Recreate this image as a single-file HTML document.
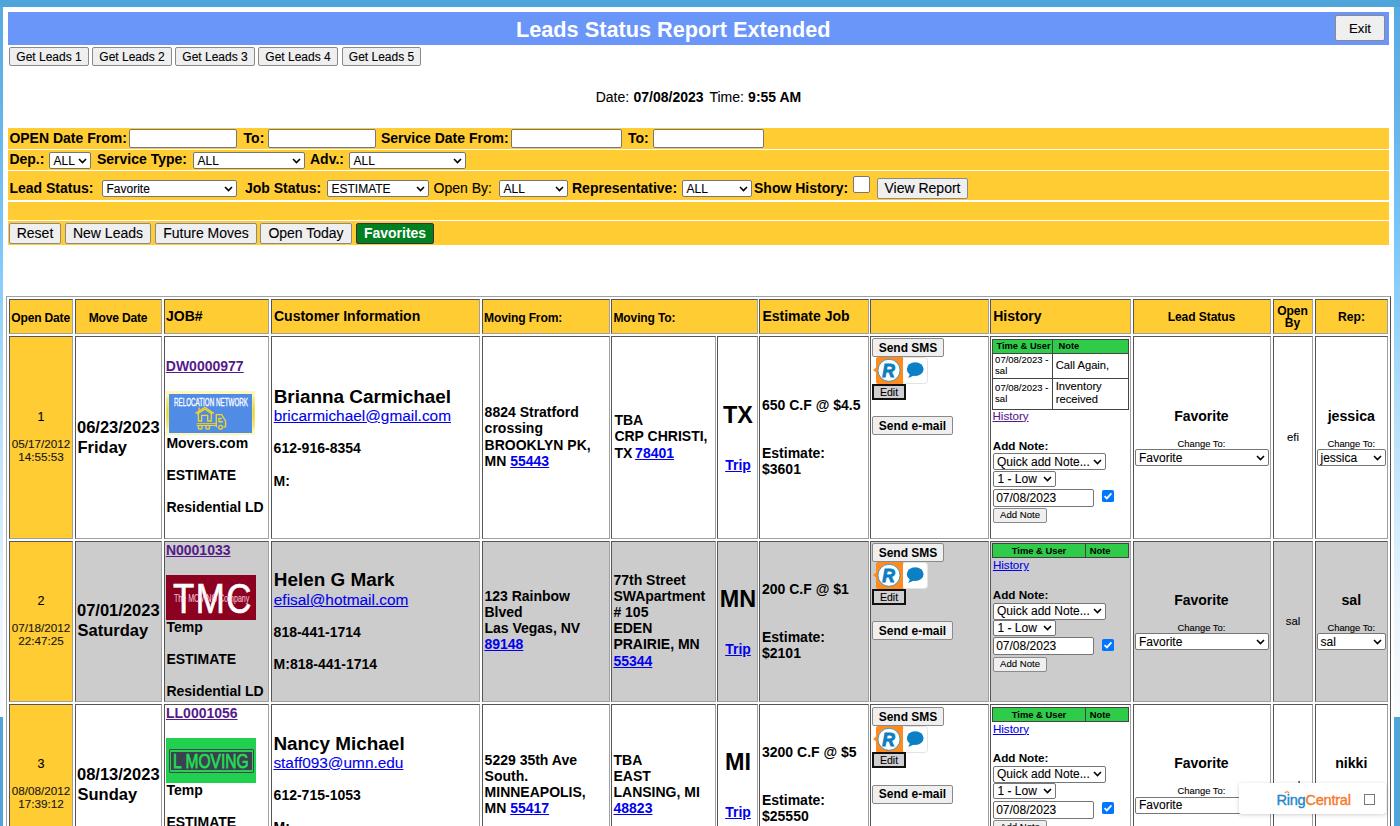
<!DOCTYPE html><html><head><meta charset="utf-8"><style>
*{margin:0;padding:0}
html,body{width:1400px;height:826px;overflow:hidden;background:#fff;font-family:"Liberation Sans",sans-serif;position:relative}
body>div,body>svg{position:absolute}
.t{position:absolute;white-space:nowrap;line-height:1}
a,.lnk{text-decoration:underline}
</style></head><body><div style="left:0px;top:0px;width:1400px;height:7px;background:#4FA4DA"></div>
<div style="left:0px;top:7px;width:3px;height:710px;background:linear-gradient(#57ABE3 0%,#62B2E8 13%,#7DC8FA 34%,#B0DEFA 55%,#E8F4FD 83%,#F8FBFE 100%)"></div>
<div style="left:1394px;top:7px;width:6px;height:710px;background:linear-gradient(#57ABE3 0%,#62B2E8 13%,#7DC8FA 34%,#B0DEFA 55%,#E8F4FD 83%,#F8FBFE 100%)"></div>
<div style="left:0px;top:717px;width:3px;height:109px;background:#4FA4DA"></div>
<div style="left:1394px;top:717px;width:6px;height:109px;background:#4FA4DA"></div>
<div style="left:8px;top:12px;width:1381px;height:33px;background:#6A96FA"></div>
<div class="t" style="left:516px;top:18.63px;font-size:21.7px;font-weight:bold;color:#fff;">Leads Status Report Extended</div>
<div style="left:1335px;top:15px;width:50px;height:26px;background:#EFEFEF;border:1px solid #8A8A8A;border-radius:2px;box-sizing:border-box;"></div>
<div class="t" style="left:1060.0px;width:600px;text-align:center;top:21.63px;font-size:13.2px;font-weight:normal;color:#000;-webkit-text-stroke:0.1px;">Exit</div>
<div style="left:9px;top:47px;width:80px;height:19px;background:#EFEFEF;border:1px solid #8A8A8A;border-radius:2px;box-sizing:border-box;"></div>
<div class="t" style="left:-251.0px;width:600px;text-align:center;top:50.84px;font-size:12px;font-weight:normal;color:#000;-webkit-text-stroke:0.1px;">Get Leads 1</div>
<div style="left:92px;top:47px;width:80px;height:19px;background:#EFEFEF;border:1px solid #8A8A8A;border-radius:2px;box-sizing:border-box;"></div>
<div class="t" style="left:-168.0px;width:600px;text-align:center;top:50.84px;font-size:12px;font-weight:normal;color:#000;-webkit-text-stroke:0.1px;">Get Leads 2</div>
<div style="left:175px;top:47px;width:80px;height:19px;background:#EFEFEF;border:1px solid #8A8A8A;border-radius:2px;box-sizing:border-box;"></div>
<div class="t" style="left:-85.0px;width:600px;text-align:center;top:50.84px;font-size:12px;font-weight:normal;color:#000;-webkit-text-stroke:0.1px;">Get Leads 3</div>
<div style="left:258px;top:47px;width:80px;height:19px;background:#EFEFEF;border:1px solid #8A8A8A;border-radius:2px;box-sizing:border-box;"></div>
<div class="t" style="left:-2.0px;width:600px;text-align:center;top:50.84px;font-size:12px;font-weight:normal;color:#000;-webkit-text-stroke:0.1px;">Get Leads 4</div>
<div style="left:342px;top:47px;width:79px;height:19px;background:#EFEFEF;border:1px solid #8A8A8A;border-radius:2px;box-sizing:border-box;"></div>
<div class="t" style="left:81.5px;width:600px;text-align:center;top:50.84px;font-size:12px;font-weight:normal;color:#000;-webkit-text-stroke:0.1px;">Get Leads 5</div>
<div class="t" style="left:595.7px;top:90.15px;font-size:14px;font-weight:normal;color:#000;-webkit-text-stroke:0.1px;">Date:</div>
<div class="t" style="left:633.5px;top:90.15px;font-size:14px;font-weight:bold;color:#000;">07/08/2023</div>
<div class="t" style="left:709.4px;top:90.15px;font-size:14px;font-weight:normal;color:#000;-webkit-text-stroke:0.1px;">Time:</div>
<div class="t" style="left:748.1px;top:90.15px;font-size:14px;font-weight:bold;color:#000;">9:55 AM</div>
<div style="left:8px;top:128px;width:1381px;height:21px;background:#FFCC33"></div>
<div style="left:8px;top:150px;width:1381px;height:20px;background:#FFCC33"></div>
<div style="left:8px;top:171px;width:1381px;height:29px;background:#FFCC33"></div>
<div style="left:8px;top:202px;width:1381px;height:18px;background:#FFCC33"></div>
<div style="left:8px;top:221px;width:1381px;height:24px;background:#FFCC33"></div>
<div class="t" style="left:9.4px;top:130.75px;font-size:14px;font-weight:bold;color:#000;">OPEN Date From:</div>
<div style="left:129px;top:129px;width:108px;height:19px;background:#fff;border:1px solid #767676;border-radius:2px;box-sizing:border-box;"></div>
<div class="t" style="left:243.6px;top:130.75px;font-size:14px;font-weight:bold;color:#000;">To:</div>
<div style="left:268px;top:129px;width:108px;height:19px;background:#fff;border:1px solid #767676;border-radius:2px;box-sizing:border-box;"></div>
<div class="t" style="left:381px;top:130.75px;font-size:14px;font-weight:bold;color:#000;">Service Date From:</div>
<div style="left:511px;top:129px;width:111px;height:19px;background:#fff;border:1px solid #767676;border-radius:2px;box-sizing:border-box;"></div>
<div class="t" style="left:628px;top:130.75px;font-size:14px;font-weight:bold;color:#000;">To:</div>
<div style="left:653px;top:129px;width:111px;height:19px;background:#fff;border:1px solid #767676;border-radius:2px;box-sizing:border-box;"></div>
<div class="t" style="left:9.4px;top:151.95px;font-size:14px;font-weight:bold;color:#000;">Dep.:</div>
<div style="left:49px;top:152px;width:42px;height:17px;background:#fff;border:1px solid #767676;border-radius:2px;box-sizing:border-box;"></div>
<div class="t" style="left:53.5px;top:154.66px;font-size:12px;font-weight:normal;color:#000;-webkit-text-stroke:0.1px;">ALL</div>
<svg style="position:absolute;left:78px;top:157.9px" width="9" height="6" viewBox="0 0 9 6"><path d="M1 1 L4.5 4.5 L8 1" fill="none" stroke="#000" stroke-width="1.6"/></svg>
<div class="t" style="left:97px;top:151.95px;font-size:14px;font-weight:bold;color:#000;">Service Type:</div>
<div style="left:193px;top:152px;width:112px;height:17px;background:#fff;border:1px solid #767676;border-radius:2px;box-sizing:border-box;"></div>
<div class="t" style="left:197.5px;top:154.66px;font-size:12px;font-weight:normal;color:#000;-webkit-text-stroke:0.1px;">ALL</div>
<svg style="position:absolute;left:292px;top:157.9px" width="9" height="6" viewBox="0 0 9 6"><path d="M1 1 L4.5 4.5 L8 1" fill="none" stroke="#000" stroke-width="1.6"/></svg>
<div class="t" style="left:310px;top:151.95px;font-size:14px;font-weight:bold;color:#000;">Adv.:</div>
<div style="left:349px;top:152px;width:117px;height:17px;background:#fff;border:1px solid #767676;border-radius:2px;box-sizing:border-box;"></div>
<div class="t" style="left:353.5px;top:154.66px;font-size:12px;font-weight:normal;color:#000;-webkit-text-stroke:0.1px;">ALL</div>
<svg style="position:absolute;left:453px;top:157.9px" width="9" height="6" viewBox="0 0 9 6"><path d="M1 1 L4.5 4.5 L8 1" fill="none" stroke="#000" stroke-width="1.6"/></svg>
<div class="t" style="left:9.4px;top:181.05px;font-size:14px;font-weight:bold;color:#000;">Lead Status:</div>
<div style="left:102px;top:180px;width:135px;height:17px;background:#fff;border:1px solid #767676;border-radius:2px;box-sizing:border-box;"></div>
<div class="t" style="left:106.5px;top:182.66px;font-size:12px;font-weight:normal;color:#000;-webkit-text-stroke:0.1px;">Favorite</div>
<svg style="position:absolute;left:224px;top:185.9px" width="9" height="6" viewBox="0 0 9 6"><path d="M1 1 L4.5 4.5 L8 1" fill="none" stroke="#000" stroke-width="1.6"/></svg>
<div class="t" style="left:245px;top:181.05px;font-size:14px;font-weight:bold;color:#000;">Job Status:</div>
<div style="left:327px;top:180px;width:102px;height:17px;background:#fff;border:1px solid #767676;border-radius:2px;box-sizing:border-box;"></div>
<div class="t" style="left:331.5px;top:182.66px;font-size:12px;font-weight:normal;color:#000;-webkit-text-stroke:0.1px;">ESTIMATE</div>
<svg style="position:absolute;left:416px;top:185.9px" width="9" height="6" viewBox="0 0 9 6"><path d="M1 1 L4.5 4.5 L8 1" fill="none" stroke="#000" stroke-width="1.6"/></svg>
<div class="t" style="left:433.5px;top:181.05px;font-size:14px;font-weight:normal;color:#000;-webkit-text-stroke:0.1px;">Open By:</div>
<div style="left:499px;top:180px;width:69px;height:17px;background:#fff;border:1px solid #767676;border-radius:2px;box-sizing:border-box;"></div>
<div class="t" style="left:503.5px;top:182.66px;font-size:12px;font-weight:normal;color:#000;-webkit-text-stroke:0.1px;">ALL</div>
<svg style="position:absolute;left:555px;top:185.9px" width="9" height="6" viewBox="0 0 9 6"><path d="M1 1 L4.5 4.5 L8 1" fill="none" stroke="#000" stroke-width="1.6"/></svg>
<div class="t" style="left:572px;top:181.05px;font-size:14px;font-weight:bold;color:#000;">Representative:</div>
<div style="left:682px;top:180px;width:70px;height:17px;background:#fff;border:1px solid #767676;border-radius:2px;box-sizing:border-box;"></div>
<div class="t" style="left:686.5px;top:182.66px;font-size:12px;font-weight:normal;color:#000;-webkit-text-stroke:0.1px;">ALL</div>
<svg style="position:absolute;left:739px;top:185.9px" width="9" height="6" viewBox="0 0 9 6"><path d="M1 1 L4.5 4.5 L8 1" fill="none" stroke="#000" stroke-width="1.6"/></svg>
<div class="t" style="left:754px;top:181.05px;font-size:14px;font-weight:bold;color:#000;">Show History:</div>
<div style="left:853px;top:176px;width:17px;height:17px;background:#fff;border:1px solid #767676;border-radius:2px;box-sizing:border-box;"></div>
<div style="left:877px;top:178px;width:91px;height:21px;background:#EFEFEF;border:1px solid #8A8A8A;border-radius:2px;box-sizing:border-box;"></div>
<div class="t" style="left:622.5px;width:600px;text-align:center;top:181.15px;font-size:14px;font-weight:normal;color:#000;-webkit-text-stroke:0.1px;">View Report</div>
<div style="left:9px;top:223px;width:52px;height:21px;background:#EFEFEF;border:1px solid #8A8A8A;border-radius:2px;box-sizing:border-box;"></div>
<div class="t" style="left:-265.0px;width:600px;text-align:center;top:226.15px;font-size:14px;font-weight:normal;color:#000;-webkit-text-stroke:0.1px;">Reset</div>
<div style="left:65px;top:223px;width:86px;height:21px;background:#EFEFEF;border:1px solid #8A8A8A;border-radius:2px;box-sizing:border-box;"></div>
<div class="t" style="left:-192.0px;width:600px;text-align:center;top:226.15px;font-size:14px;font-weight:normal;color:#000;-webkit-text-stroke:0.1px;">New Leads</div>
<div style="left:155px;top:223px;width:102px;height:21px;background:#EFEFEF;border:1px solid #8A8A8A;border-radius:2px;box-sizing:border-box;"></div>
<div class="t" style="left:-94.0px;width:600px;text-align:center;top:226.15px;font-size:14px;font-weight:normal;color:#000;-webkit-text-stroke:0.1px;">Future Moves</div>
<div style="left:260px;top:223px;width:92px;height:21px;background:#EFEFEF;border:1px solid #8A8A8A;border-radius:2px;box-sizing:border-box;"></div>
<div class="t" style="left:6.0px;width:600px;text-align:center;top:226.15px;font-size:14px;font-weight:normal;color:#000;-webkit-text-stroke:0.1px;">Open Today</div>
<div style="left:356px;top:223px;width:78px;height:21px;background:#008020;border:1px solid #333;border-radius:2px;box-sizing:border-box;"></div>
<div class="t" style="left:95.0px;width:600px;text-align:center;top:226.15px;font-size:14px;font-weight:bold;color:#fff;">Favorites</div>
<div style="left:6px;top:296px;width:1385px;height:600px;border:1px solid;border-color:#A0A0A0 #505050 #505050 #A0A0A0;box-sizing:border-box"></div>
<div style="left:9px;top:299px;width:64px;height:35px;background:#FFCC33;border:1px solid;border-color:#555 #A0A0A0 #A0A0A0 #555;box-sizing:border-box"></div>
<div style="left:75px;top:299px;width:87px;height:35px;background:#FFCC33;border:1px solid;border-color:#555 #A0A0A0 #A0A0A0 #555;box-sizing:border-box"></div>
<div style="left:164px;top:299px;width:105px;height:35px;background:#FFCC33;border:1px solid;border-color:#555 #A0A0A0 #A0A0A0 #555;box-sizing:border-box"></div>
<div style="left:271px;top:299px;width:209px;height:35px;background:#FFCC33;border:1px solid;border-color:#555 #A0A0A0 #A0A0A0 #555;box-sizing:border-box"></div>
<div style="left:482px;top:299px;width:128px;height:35px;background:#FFCC33;border:1px solid;border-color:#555 #A0A0A0 #A0A0A0 #555;box-sizing:border-box"></div>
<div style="left:611px;top:299px;width:147px;height:35px;background:#FFCC33;border:1px solid;border-color:#555 #A0A0A0 #A0A0A0 #555;box-sizing:border-box"></div>
<div style="left:759px;top:299px;width:110px;height:35px;background:#FFCC33;border:1px solid;border-color:#555 #A0A0A0 #A0A0A0 #555;box-sizing:border-box"></div>
<div style="left:870px;top:299px;width:119px;height:35px;background:#FFCC33;border:1px solid;border-color:#555 #A0A0A0 #A0A0A0 #555;box-sizing:border-box"></div>
<div style="left:990px;top:299px;width:141px;height:35px;background:#FFCC33;border:1px solid;border-color:#555 #A0A0A0 #A0A0A0 #555;box-sizing:border-box"></div>
<div style="left:1133px;top:299px;width:138px;height:35px;background:#FFCC33;border:1px solid;border-color:#555 #A0A0A0 #A0A0A0 #555;box-sizing:border-box"></div>
<div style="left:1273px;top:299px;width:40px;height:35px;background:#FFCC33;border:1px solid;border-color:#555 #A0A0A0 #A0A0A0 #555;box-sizing:border-box"></div>
<div style="left:1315px;top:299px;width:73px;height:35px;background:#FFCC33;border:1px solid;border-color:#555 #A0A0A0 #A0A0A0 #555;box-sizing:border-box"></div>
<div style="left:9px;top:336px;width:64px;height:203px;background:#FFCC33;border:1px solid;border-color:#555 #A0A0A0 #A0A0A0 #555;box-sizing:border-box"></div>
<div style="left:75px;top:336px;width:87px;height:203px;background:#fff;border:1px solid;border-color:#555 #A0A0A0 #A0A0A0 #555;box-sizing:border-box"></div>
<div style="left:164px;top:336px;width:105px;height:203px;background:#fff;border:1px solid;border-color:#555 #A0A0A0 #A0A0A0 #555;box-sizing:border-box"></div>
<div style="left:271px;top:336px;width:209px;height:203px;background:#fff;border:1px solid;border-color:#555 #A0A0A0 #A0A0A0 #555;box-sizing:border-box"></div>
<div style="left:482px;top:336px;width:128px;height:203px;background:#fff;border:1px solid;border-color:#555 #A0A0A0 #A0A0A0 #555;box-sizing:border-box"></div>
<div style="left:611px;top:336px;width:105px;height:203px;background:#fff;border:1px solid;border-color:#555 #A0A0A0 #A0A0A0 #555;box-sizing:border-box"></div>
<div style="left:717px;top:336px;width:41px;height:203px;background:#fff;border:1px solid;border-color:#555 #A0A0A0 #A0A0A0 #555;box-sizing:border-box"></div>
<div style="left:759px;top:336px;width:110px;height:203px;background:#fff;border:1px solid;border-color:#555 #A0A0A0 #A0A0A0 #555;box-sizing:border-box"></div>
<div style="left:870px;top:336px;width:119px;height:203px;background:#fff;border:1px solid;border-color:#555 #A0A0A0 #A0A0A0 #555;box-sizing:border-box"></div>
<div style="left:990px;top:336px;width:141px;height:203px;background:#fff;border:1px solid;border-color:#555 #A0A0A0 #A0A0A0 #555;box-sizing:border-box"></div>
<div style="left:1133px;top:336px;width:138px;height:203px;background:#fff;border:1px solid;border-color:#555 #A0A0A0 #A0A0A0 #555;box-sizing:border-box"></div>
<div style="left:1273px;top:336px;width:40px;height:203px;background:#fff;border:1px solid;border-color:#555 #A0A0A0 #A0A0A0 #555;box-sizing:border-box"></div>
<div style="left:1315px;top:336px;width:73px;height:203px;background:#fff;border:1px solid;border-color:#555 #A0A0A0 #A0A0A0 #555;box-sizing:border-box"></div>
<div style="left:9px;top:541px;width:64px;height:161px;background:#FFCC33;border:1px solid;border-color:#555 #A0A0A0 #A0A0A0 #555;box-sizing:border-box"></div>
<div style="left:75px;top:541px;width:87px;height:161px;background:#CCCCCC;border:1px solid;border-color:#555 #A0A0A0 #A0A0A0 #555;box-sizing:border-box"></div>
<div style="left:164px;top:541px;width:105px;height:161px;background:#CCCCCC;border:1px solid;border-color:#555 #A0A0A0 #A0A0A0 #555;box-sizing:border-box"></div>
<div style="left:271px;top:541px;width:209px;height:161px;background:#CCCCCC;border:1px solid;border-color:#555 #A0A0A0 #A0A0A0 #555;box-sizing:border-box"></div>
<div style="left:482px;top:541px;width:128px;height:161px;background:#CCCCCC;border:1px solid;border-color:#555 #A0A0A0 #A0A0A0 #555;box-sizing:border-box"></div>
<div style="left:611px;top:541px;width:105px;height:161px;background:#CCCCCC;border:1px solid;border-color:#555 #A0A0A0 #A0A0A0 #555;box-sizing:border-box"></div>
<div style="left:717px;top:541px;width:41px;height:161px;background:#CCCCCC;border:1px solid;border-color:#555 #A0A0A0 #A0A0A0 #555;box-sizing:border-box"></div>
<div style="left:759px;top:541px;width:110px;height:161px;background:#CCCCCC;border:1px solid;border-color:#555 #A0A0A0 #A0A0A0 #555;box-sizing:border-box"></div>
<div style="left:870px;top:541px;width:119px;height:161px;background:#CCCCCC;border:1px solid;border-color:#555 #A0A0A0 #A0A0A0 #555;box-sizing:border-box"></div>
<div style="left:990px;top:541px;width:141px;height:161px;background:#CCCCCC;border:1px solid;border-color:#555 #A0A0A0 #A0A0A0 #555;box-sizing:border-box"></div>
<div style="left:1133px;top:541px;width:138px;height:161px;background:#CCCCCC;border:1px solid;border-color:#555 #A0A0A0 #A0A0A0 #555;box-sizing:border-box"></div>
<div style="left:1273px;top:541px;width:40px;height:161px;background:#CCCCCC;border:1px solid;border-color:#555 #A0A0A0 #A0A0A0 #555;box-sizing:border-box"></div>
<div style="left:1315px;top:541px;width:73px;height:161px;background:#CCCCCC;border:1px solid;border-color:#555 #A0A0A0 #A0A0A0 #555;box-sizing:border-box"></div>
<div style="left:9px;top:704px;width:64px;height:297px;background:#FFCC33;border:1px solid;border-color:#555 #A0A0A0 #A0A0A0 #555;box-sizing:border-box"></div>
<div style="left:75px;top:704px;width:87px;height:297px;background:#fff;border:1px solid;border-color:#555 #A0A0A0 #A0A0A0 #555;box-sizing:border-box"></div>
<div style="left:164px;top:704px;width:105px;height:297px;background:#fff;border:1px solid;border-color:#555 #A0A0A0 #A0A0A0 #555;box-sizing:border-box"></div>
<div style="left:271px;top:704px;width:209px;height:297px;background:#fff;border:1px solid;border-color:#555 #A0A0A0 #A0A0A0 #555;box-sizing:border-box"></div>
<div style="left:482px;top:704px;width:128px;height:297px;background:#fff;border:1px solid;border-color:#555 #A0A0A0 #A0A0A0 #555;box-sizing:border-box"></div>
<div style="left:611px;top:704px;width:105px;height:297px;background:#fff;border:1px solid;border-color:#555 #A0A0A0 #A0A0A0 #555;box-sizing:border-box"></div>
<div style="left:717px;top:704px;width:41px;height:297px;background:#fff;border:1px solid;border-color:#555 #A0A0A0 #A0A0A0 #555;box-sizing:border-box"></div>
<div style="left:759px;top:704px;width:110px;height:297px;background:#fff;border:1px solid;border-color:#555 #A0A0A0 #A0A0A0 #555;box-sizing:border-box"></div>
<div style="left:870px;top:704px;width:119px;height:297px;background:#fff;border:1px solid;border-color:#555 #A0A0A0 #A0A0A0 #555;box-sizing:border-box"></div>
<div style="left:990px;top:704px;width:141px;height:297px;background:#fff;border:1px solid;border-color:#555 #A0A0A0 #A0A0A0 #555;box-sizing:border-box"></div>
<div style="left:1133px;top:704px;width:138px;height:297px;background:#fff;border:1px solid;border-color:#555 #A0A0A0 #A0A0A0 #555;box-sizing:border-box"></div>
<div style="left:1273px;top:704px;width:40px;height:297px;background:#fff;border:1px solid;border-color:#555 #A0A0A0 #A0A0A0 #555;box-sizing:border-box"></div>
<div style="left:1315px;top:704px;width:73px;height:297px;background:#fff;border:1px solid;border-color:#555 #A0A0A0 #A0A0A0 #555;box-sizing:border-box"></div>
<div class="t" style="left:11.3px;top:311.56px;font-size:12.1px;font-weight:bold;color:#000;letter-spacing:-0.2px;">Open Date</div>
<div class="t" style="left:-182px;width:600px;text-align:center;top:311.56px;font-size:12.1px;font-weight:bold;color:#000;letter-spacing:-0.2px;">Move Date</div>
<div class="t" style="left:166px;top:309.25px;font-size:14px;font-weight:bold;color:#000;">JOB#</div>
<div class="t" style="left:274px;top:309.15px;font-size:14px;font-weight:bold;color:#000;">Customer Information</div>
<div class="t" style="left:484px;top:311.96px;font-size:12.1px;font-weight:bold;color:#000;letter-spacing:-0.15px;">Moving From:</div>
<div class="t" style="left:613.4px;top:311.96px;font-size:12.1px;font-weight:bold;color:#000;letter-spacing:-0.15px;">Moving To:</div>
<div class="t" style="left:762.4px;top:308.65px;font-size:14px;font-weight:bold;color:#000;">Estimate Job</div>
<div class="t" style="left:993.2px;top:309.05px;font-size:14px;font-weight:bold;color:#000;">History</div>
<div class="t" style="left:901.4000000000001px;width:600px;text-align:center;top:311.36px;font-size:12.1px;font-weight:bold;color:#000;letter-spacing:-0.1px;">Lead Status</div>
<div class="t" style="left:992.5px;width:600px;text-align:center;top:304.66px;font-size:12.1px;font-weight:bold;color:#000;letter-spacing:-0.1px;">Open</div>
<div class="t" style="left:992.5px;width:600px;text-align:center;top:317.26px;font-size:12.1px;font-weight:bold;color:#000;">By</div>
<div class="t" style="left:1051.5px;width:600px;text-align:center;top:311.46px;font-size:12.1px;font-weight:bold;color:#000;">Rep:</div>
<div class="t" style="left:-259px;width:600px;text-align:center;top:411.13px;font-size:12.6px;font-weight:normal;color:#000;-webkit-text-stroke:0.1px;">1</div>
<div class="t" style="left:-259px;width:600px;text-align:center;top:438.40px;font-size:11.7px;font-weight:normal;color:#151515;-webkit-text-stroke:0.1px;">05/17/2012</div>
<div class="t" style="left:-259px;width:600px;text-align:center;top:451.40px;font-size:11.7px;font-weight:normal;color:#151515;-webkit-text-stroke:0.1px;">14:55:53</div>
<div class="t" style="left:77px;top:419.43px;font-size:16.5px;font-weight:bold;color:#000;">06/23/2023</div>
<div class="t" style="left:77.5px;top:439.23px;font-size:16.5px;font-weight:bold;color:#000;">Friday</div>
<div class="t" style="left:165.8px;top:358.95px;font-size:14px;font-weight:bold;color:#551A8B;text-decoration:underline;">DW0000977</div>
<div style="left:166px;top:391px;width:89px;height:44px;background:#FFF6BC"></div>
<div style="left:166px;top:397px;width:3px;height:32px;background:radial-gradient(ellipse at 50% 50%,#E8D21E 0%,#F3E570 55%,#FFF6BC 100%)"></div>
<div style="left:252px;top:397px;width:3px;height:32px;background:radial-gradient(ellipse at 50% 50%,#E8D21E 0%,#F3E570 55%,#FFF6BC 100%)"></div>
<div style="left:169px;top:394px;width:83px;height:39px;background:#508CE6"></div>
<div class="t" style="left:173.8px;top:396.6px;font-size:11.2px;line-height:10px;font-weight:normal;-webkit-text-stroke:0.35px #fff;color:#fff;transform:scaleX(0.56);transform-origin:0 0">RELOCATION NETWORK</div>
<svg style="position:absolute;left:162px;top:386px" width="100" height="55" viewBox="0 0 100 55"><g fill="none" stroke="#F2D42A" stroke-width="1.35" stroke-linejoin="round" stroke-linecap="round"><path d="M33.9 27.1 L42.9 21.4 L51.4 27.1"/><path d="M35.6 27.6 L42.9 23.2 L49.8 27.6"/><path d="M37.1 22 V24.5"/><path d="M36.4 27 V35 H39.6 V29.3 H45.7 V35 H49.3 V27"/><path d="M35 37.7 H54.3" stroke-width="1"/><path d="M35 39.5 H54.3" stroke-width="1"/><path d="M54.3 40.7 V28.6 H59.6 L63.6 35 V40.7 H62"/><path d="M59.3 32.5 H57 V35.7 H60.3"/><circle cx="38.2" cy="41.2" r="1.9"/><circle cx="45.7" cy="41.2" r="1.9"/><circle cx="58.6" cy="41.2" r="1.9"/></g></svg>
<div class="t" style="left:166.4px;top:435.95px;font-size:14px;font-weight:bold;color:#000;">Movers.com</div>
<div class="t" style="left:166.4px;top:468.45px;font-size:14px;font-weight:bold;color:#000;">ESTIMATE</div>
<div class="t" style="left:166.4px;top:500.45px;font-size:14px;font-weight:bold;color:#000;">Residential LD</div>
<div class="t" style="left:273.7px;top:388.20px;font-size:18.9px;font-weight:bold;color:#000;">Brianna Carmichael</div>
<div class="t" style="left:273.7px;top:407.66px;font-size:15.4px;font-weight:normal;color:#0000EE;-webkit-text-stroke:0.1px;text-decoration:underline;">bricarmichael@gmail.com</div>
<div class="t" style="left:273.6px;top:441.45px;font-size:14px;font-weight:bold;color:#000;">612-916-8354</div>
<div class="t" style="left:273.6px;top:473.75px;font-size:14px;font-weight:bold;color:#000;">M:</div>
<div class="t" style="left:484.6px;top:405.35px;font-size:14px;font-weight:bold;color:#000;">8824 Stratford</div>
<div class="t" style="left:484.6px;top:421.45px;font-size:14px;font-weight:bold;color:#000;">crossing</div>
<div class="t" style="left:484.6px;top:437.55px;font-size:14px;font-weight:bold;color:#000;">BROOKLYN PK,</div>
<div class="t" style="left:484.6px;top:453.65px;font-size:14px;font-weight:bold;color:#000;">MN </div>
<div class="t" style="left:510.2px;top:453.65px;font-size:14px;font-weight:bold;color:#0000EE;text-decoration:underline;">55443</div>
<div class="t" style="left:614.4px;top:413.35px;font-size:14px;font-weight:bold;color:#000;">TBA</div>
<div class="t" style="left:614.4px;top:429.45px;font-size:14px;font-weight:bold;color:#000;">CRP CHRISTI,</div>
<div class="t" style="left:614.4px;top:445.55px;font-size:14px;font-weight:bold;color:#000;">TX </div>
<div class="t" style="left:635.1px;top:445.55px;font-size:14px;font-weight:bold;color:#0000EE;text-decoration:underline;">78401</div>
<div class="t" style="left:438px;width:600px;text-align:center;top:403.59px;font-size:23.4px;font-weight:bold;color:#000;transform:scaleY(1.06);transform-origin:50% 85%;">TX</div>
<div class="t" style="left:438px;width:600px;text-align:center;top:457.75px;font-size:14px;font-weight:bold;color:#0000EE;"><span style="text-decoration:underline">Trip</span></div>
<div class="t" style="left:762px;top:397.75px;font-size:14px;font-weight:bold;color:#000;">650 C.F @ $4.5</div>
<div class="t" style="left:762px;top:446.05px;font-size:14px;font-weight:bold;color:#000;">Estimate:</div>
<div class="t" style="left:762px;top:461.65px;font-size:14px;font-weight:bold;color:#000;">$3601</div>
<div style="left:872px;top:338px;width:72px;height:19px;background:#EFEFEF;border:1px solid #8A8A8A;border-radius:2px;box-sizing:border-box;"></div>
<div class="t" style="left:608.0px;width:600px;text-align:center;top:341.54px;font-size:12px;font-weight:bold;color:#000;">Send SMS</div>
<svg style="position:absolute;left:872px;top:357px" width="58" height="27" viewBox="0 0 58 27"><rect x="30.5" y="0.5" width="25" height="26" rx="3" fill="#fff" stroke="#E3E3E3"/><path d="M6 0 H31 V27 H6 Q4 27 4 25 V15.5 L1 13 L4 10.5 V2 Q4 0 6 0 Z" fill="#FF8A1E"/><circle cx="17" cy="13.3" r="11" fill="#fff" stroke="#1D8BC6" stroke-width="0.8"/><text x="16.6" y="19.6" font-family="Liberation Sans" font-weight="bold" font-style="italic" font-size="17.5" fill="#0B7DC1" stroke="#0B7DC1" stroke-width="0.9" text-anchor="middle">R</text><ellipse cx="43.2" cy="12.1" rx="8.4" ry="6.9" fill="#0B80C4"/><path d="M38.3 16 L36.3 21 L42.5 18.2 Z" fill="#0B80C4"/></svg>
<div style="left:872px;top:384px;width:34px;height:16px;background:#D0D0D0;border:2px solid #111;box-sizing:border-box;"></div>
<div class="t" style="left:589px;width:600px;text-align:center;top:386.91px;font-size:10.5px;font-weight:normal;color:#000;-webkit-text-stroke:0.1px;">Edit</div>
<div style="left:872px;top:416px;width:81px;height:19px;background:#EFEFEF;border:1px solid #8A8A8A;border-radius:2px;box-sizing:border-box;"></div>
<div class="t" style="left:612.5px;width:600px;text-align:center;top:419.54px;font-size:12px;font-weight:bold;color:#000;">Send e-mail</div>
<div style="left:992px;top:339px;width:137px;height:71px;border:1px solid #444;box-sizing:border-box"></div>
<div style="left:993px;top:340px;width:135px;height:14px;background:#2ECC48"></div>
<div style="left:993px;top:353px;width:135px;height:1px;background:#444"></div>
<div style="left:993px;top:378px;width:135px;height:1px;background:#444"></div>
<div style="left:1052px;top:340px;width:1px;height:69px;background:#444"></div>
<div class="t" style="left:996.5px;top:341.53px;font-size:9.3px;font-weight:bold;color:#000;">Time &amp; User</div>
<div class="t" style="left:1058.6px;top:341.53px;font-size:9.3px;font-weight:bold;color:#000;">Note</div>
<div class="t" style="left:995.1px;top:355.16px;font-size:9.5px;font-weight:normal;color:#000;-webkit-text-stroke:0.1px;">07/08/2023 -</div>
<div class="t" style="left:995.1px;top:366.26px;font-size:9.5px;font-weight:normal;color:#000;-webkit-text-stroke:0.1px;">sal</div>
<div class="t" style="left:1055.7px;top:360.02px;font-size:11.2px;font-weight:normal;color:#000;-webkit-text-stroke:0.1px;">Call Again,</div>
<div class="t" style="left:995.1px;top:383.26px;font-size:9.5px;font-weight:normal;color:#000;-webkit-text-stroke:0.1px;">07/08/2023 -</div>
<div class="t" style="left:995.1px;top:394.26px;font-size:9.5px;font-weight:normal;color:#000;-webkit-text-stroke:0.1px;">sal</div>
<div class="t" style="left:1055.7px;top:380.72px;font-size:11.2px;font-weight:normal;color:#000;-webkit-text-stroke:0.1px;">Inventory</div>
<div class="t" style="left:1055.7px;top:393.92px;font-size:11.2px;font-weight:normal;color:#000;-webkit-text-stroke:0.1px;">received</div>
<div class="t" style="left:992.5px;top:409.68px;font-size:11.6px;font-weight:normal;color:#551A8B;-webkit-text-stroke:0.1px;text-decoration:underline;">History</div>
<div class="t" style="left:992.7px;top:440.20px;font-size:11.7px;font-weight:bold;color:#000;">Add Note:</div>
<div style="left:993px;top:453px;width:113px;height:17px;background:#fff;border:1px solid #767676;border-radius:2px;box-sizing:border-box;"></div>
<div class="t" style="left:997px;top:455.66px;font-size:12px;font-weight:normal;color:#000;-webkit-text-stroke:0.1px;">Quick add Note...</div>
<svg style="position:absolute;left:1093px;top:458.9px" width="9" height="6" viewBox="0 0 9 6"><path d="M1 1 L4.5 4.5 L8 1" fill="none" stroke="#000" stroke-width="1.6"/></svg>
<div style="left:993px;top:470.5px;width:63px;height:16px;background:#fff;border:1px solid #767676;border-radius:2px;box-sizing:border-box;"></div>
<div class="t" style="left:997.5px;top:472.66px;font-size:12px;font-weight:normal;color:#000;-webkit-text-stroke:0.1px;">1 - Low</div>
<svg style="position:absolute;left:1043px;top:475.9px" width="9" height="6" viewBox="0 0 9 6"><path d="M1 1 L4.5 4.5 L8 1" fill="none" stroke="#000" stroke-width="1.6"/></svg>
<div style="left:993px;top:488.5px;width:101px;height:18px;background:#fff;border:1px solid #767676;border-radius:2px;box-sizing:border-box;"></div>
<div class="t" style="left:996.2px;top:491.66px;font-size:12px;font-weight:normal;color:#000;-webkit-text-stroke:0.1px;">07/08/2023</div>
<svg style="position:absolute;left:1102px;top:490.0px" width="12" height="12" viewBox="0 0 13 13"><rect x="0" y="0" width="13" height="13" rx="2" fill="#0075FF"/><path d="M2.8 6.6 L5.3 9.1 L10.2 3.6" fill="none" stroke="#fff" stroke-width="1.9"/></svg>
<div style="left:993px;top:507.5px;width:54px;height:15px;background:#EFEFEF;border:1px solid #8A8A8A;border-radius:2px;box-sizing:border-box;"></div>
<div class="t" style="left:720.0px;width:600px;text-align:center;top:510.17px;font-size:9.6px;font-weight:normal;color:#000;-webkit-text-stroke:0.1px;">Add Note</div>
<div class="t" style="left:901.4000000000001px;width:600px;text-align:center;top:409.15px;font-size:14px;font-weight:bold;color:#000;">Favorite</div>
<div class="t" style="left:901.4000000000001px;width:600px;text-align:center;top:439.04px;font-size:9.4px;font-weight:normal;color:#000;-webkit-text-stroke:0.1px;">Change To:</div>
<div style="left:1135px;top:449px;width:134px;height:17px;background:#fff;border:1px solid #767676;border-radius:2px;box-sizing:border-box;"></div>
<div class="t" style="left:1139px;top:451.66px;font-size:12px;font-weight:normal;color:#000;-webkit-text-stroke:0.1px;">Favorite</div>
<svg style="position:absolute;left:1256px;top:454.9px" width="9" height="6" viewBox="0 0 9 6"><path d="M1 1 L4.5 4.5 L8 1" fill="none" stroke="#000" stroke-width="1.6"/></svg>
<div class="t" style="left:993px;width:600px;text-align:center;top:431.93px;font-size:11.3px;font-weight:normal;color:#000;-webkit-text-stroke:0.1px;">efi</div>
<div class="t" style="left:1051.3px;width:600px;text-align:center;top:408.98px;font-size:14.2px;font-weight:bold;color:#000;">jessica</div>
<div class="t" style="left:1051.3px;width:600px;text-align:center;top:439.04px;font-size:9.4px;font-weight:normal;color:#000;-webkit-text-stroke:0.1px;">Change To:</div>
<div style="left:1317px;top:449px;width:69px;height:17px;background:#fff;border:1px solid #767676;border-radius:2px;box-sizing:border-box;"></div>
<div class="t" style="left:1320.5px;top:451.66px;font-size:12px;font-weight:normal;color:#000;-webkit-text-stroke:0.1px;">jessica</div>
<svg style="position:absolute;left:1373px;top:454.9px" width="9" height="6" viewBox="0 0 9 6"><path d="M1 1 L4.5 4.5 L8 1" fill="none" stroke="#000" stroke-width="1.6"/></svg>
<div class="t" style="left:-259px;width:600px;text-align:center;top:594.63px;font-size:12.6px;font-weight:normal;color:#000;-webkit-text-stroke:0.1px;">2</div>
<div class="t" style="left:-259px;width:600px;text-align:center;top:622.20px;font-size:11.7px;font-weight:normal;color:#151515;-webkit-text-stroke:0.1px;">07/18/2012</div>
<div class="t" style="left:-259px;width:600px;text-align:center;top:635.20px;font-size:11.7px;font-weight:normal;color:#151515;-webkit-text-stroke:0.1px;">22:47:25</div>
<div class="t" style="left:77px;top:602.23px;font-size:16.5px;font-weight:bold;color:#000;">07/01/2023</div>
<div class="t" style="left:77.5px;top:622.03px;font-size:16.5px;font-weight:bold;color:#000;">Saturday</div>
<div class="t" style="left:165.9px;top:543.45px;font-size:14px;font-weight:bold;color:#551A8B;text-decoration:underline;">N0001033</div>
<div style="left:166px;top:575px;width:90px;height:45px;background:#8C0020;overflow:hidden"><div class="t" style="left:7.3px;top:5.6px;font-size:42.5px;line-height:36px;color:#fff;-webkit-text-stroke:0.7px #fff;transform:scaleX(0.82);transform-origin:0 0;letter-spacing:1.8px">TMC</div><div class="t" style="left:8px;top:19px;font-size:10.2px;line-height:10px;color:rgba(255,215,225,0.85);-webkit-text-stroke:0.2px rgba(255,215,225,0.85);transform:scaleX(0.697);transform-origin:0 0">The MOVING Company</div></div>
<div class="t" style="left:166.4px;top:619.95px;font-size:14px;font-weight:bold;color:#000;">Temp</div>
<div class="t" style="left:166.4px;top:652.15px;font-size:14px;font-weight:bold;color:#000;">ESTIMATE</div>
<div class="t" style="left:166.4px;top:684.25px;font-size:14px;font-weight:bold;color:#000;">Residential LD</div>
<div class="t" style="left:273.8px;top:571.40px;font-size:18.9px;font-weight:bold;color:#000;">Helen G Mark</div>
<div class="t" style="left:273.8px;top:592.36px;font-size:15.4px;font-weight:normal;color:#0000EE;-webkit-text-stroke:0.1px;text-decoration:underline;">efisal@hotmail.com</div>
<div class="t" style="left:273.6px;top:625.35px;font-size:14px;font-weight:bold;color:#000;">818-441-1714</div>
<div class="t" style="left:273.6px;top:657.25px;font-size:14px;font-weight:bold;color:#000;">M:818-441-1714</div>
<div class="t" style="left:484.4px;top:588.95px;font-size:14px;font-weight:bold;color:#000;">123 Rainbow</div>
<div class="t" style="left:484.4px;top:605.05px;font-size:14px;font-weight:bold;color:#000;">Blved</div>
<div class="t" style="left:484.4px;top:621.15px;font-size:14px;font-weight:bold;color:#000;">Las Vegas, NV</div>
<div class="t" style="left:484.4px;top:637.25px;font-size:14px;font-weight:bold;color:#0000EE;text-decoration:underline;">89148</div>
<div class="t" style="left:613.4px;top:573.05px;font-size:14px;font-weight:bold;color:#000;">77th Street</div>
<div class="t" style="left:613.4px;top:589.15px;font-size:14px;font-weight:bold;color:#000;">SWApartment</div>
<div class="t" style="left:613.4px;top:605.25px;font-size:14px;font-weight:bold;color:#000;"># 105</div>
<div class="t" style="left:613.4px;top:621.35px;font-size:14px;font-weight:bold;color:#000;">EDEN</div>
<div class="t" style="left:613.4px;top:637.45px;font-size:14px;font-weight:bold;color:#000;">PRAIRIE, MN</div>
<div class="t" style="left:613.4px;top:653.55px;font-size:14px;font-weight:bold;color:#0000EE;text-decoration:underline;">55344</div>
<div class="t" style="left:438px;width:600px;text-align:center;top:588.19px;font-size:23.4px;font-weight:bold;color:#000;transform:scaleY(1.06);transform-origin:50% 85%;">MN</div>
<div class="t" style="left:438px;width:600px;text-align:center;top:642.05px;font-size:14px;font-weight:bold;color:#0000EE;"><span style="text-decoration:underline">Trip</span></div>
<div class="t" style="left:762px;top:581.75px;font-size:14px;font-weight:bold;color:#000;">200 C.F @ $1</div>
<div class="t" style="left:762px;top:630.45px;font-size:14px;font-weight:bold;color:#000;">Estimate:</div>
<div class="t" style="left:762px;top:646.05px;font-size:14px;font-weight:bold;color:#000;">$2101</div>
<div style="left:872px;top:543px;width:72px;height:19px;background:#EFEFEF;border:1px solid #8A8A8A;border-radius:2px;box-sizing:border-box;"></div>
<div class="t" style="left:608.0px;width:600px;text-align:center;top:546.54px;font-size:12px;font-weight:bold;color:#000;">Send SMS</div>
<svg style="position:absolute;left:872px;top:562px" width="58" height="27" viewBox="0 0 58 27"><rect x="30.5" y="0.5" width="25" height="26" rx="3" fill="#fff" stroke="#E3E3E3"/><path d="M6 0 H31 V27 H6 Q4 27 4 25 V15.5 L1 13 L4 10.5 V2 Q4 0 6 0 Z" fill="#FF8A1E"/><circle cx="17" cy="13.3" r="11" fill="#fff" stroke="#1D8BC6" stroke-width="0.8"/><text x="16.6" y="19.6" font-family="Liberation Sans" font-weight="bold" font-style="italic" font-size="17.5" fill="#0B7DC1" stroke="#0B7DC1" stroke-width="0.9" text-anchor="middle">R</text><ellipse cx="43.2" cy="12.1" rx="8.4" ry="6.9" fill="#0B80C4"/><path d="M38.3 16 L36.3 21 L42.5 18.2 Z" fill="#0B80C4"/></svg>
<div style="left:872px;top:589px;width:34px;height:16px;background:#D0D0D0;border:2px solid #111;box-sizing:border-box;"></div>
<div class="t" style="left:589px;width:600px;text-align:center;top:591.91px;font-size:10.5px;font-weight:normal;color:#000;-webkit-text-stroke:0.1px;">Edit</div>
<div style="left:872px;top:621px;width:81px;height:19px;background:#EFEFEF;border:1px solid #8A8A8A;border-radius:2px;box-sizing:border-box;"></div>
<div class="t" style="left:612.5px;width:600px;text-align:center;top:624.54px;font-size:12px;font-weight:bold;color:#000;">Send e-mail</div>
<div style="left:992px;top:543px;width:137px;height:15px;background:#2ECC48;border:1px solid #444;box-sizing:border-box"></div>
<div style="left:1085px;top:543px;width:1px;height:15px;background:#444"></div>
<div class="t" style="left:739px;width:600px;text-align:center;top:545.84px;font-size:9.4px;font-weight:bold;color:#000;">Time &amp; User</div>
<div class="t" style="left:1089.7px;top:545.84px;font-size:9.4px;font-weight:bold;color:#000;">Note</div>
<div class="t" style="left:992.9px;top:559.08px;font-size:11.6px;font-weight:normal;color:#0000EE;-webkit-text-stroke:0.1px;text-decoration:underline;">History</div>
<div class="t" style="left:992.7px;top:588.70px;font-size:11.7px;font-weight:bold;color:#000;">Add Note:</div>
<div style="left:993px;top:602.5px;width:113px;height:17px;background:#fff;border:1px solid #767676;border-radius:2px;box-sizing:border-box;"></div>
<div class="t" style="left:997px;top:605.16px;font-size:12px;font-weight:normal;color:#000;-webkit-text-stroke:0.1px;">Quick add Note...</div>
<svg style="position:absolute;left:1093px;top:608.4px" width="9" height="6" viewBox="0 0 9 6"><path d="M1 1 L4.5 4.5 L8 1" fill="none" stroke="#000" stroke-width="1.6"/></svg>
<div style="left:993px;top:620px;width:63px;height:16px;background:#fff;border:1px solid #767676;border-radius:2px;box-sizing:border-box;"></div>
<div class="t" style="left:997.5px;top:622.16px;font-size:12px;font-weight:normal;color:#000;-webkit-text-stroke:0.1px;">1 - Low</div>
<svg style="position:absolute;left:1043px;top:625.4px" width="9" height="6" viewBox="0 0 9 6"><path d="M1 1 L4.5 4.5 L8 1" fill="none" stroke="#000" stroke-width="1.6"/></svg>
<div style="left:993px;top:637px;width:101px;height:18px;background:#fff;border:1px solid #767676;border-radius:2px;box-sizing:border-box;"></div>
<div class="t" style="left:996.2px;top:640.16px;font-size:12px;font-weight:normal;color:#000;-webkit-text-stroke:0.1px;">07/08/2023</div>
<svg style="position:absolute;left:1102px;top:638.5px" width="12" height="12" viewBox="0 0 13 13"><rect x="0" y="0" width="13" height="13" rx="2" fill="#0075FF"/><path d="M2.8 6.6 L5.3 9.1 L10.2 3.6" fill="none" stroke="#fff" stroke-width="1.9"/></svg>
<div style="left:993px;top:656.5px;width:54px;height:15px;background:#EFEFEF;border:1px solid #8A8A8A;border-radius:2px;box-sizing:border-box;"></div>
<div class="t" style="left:720.0px;width:600px;text-align:center;top:659.17px;font-size:9.6px;font-weight:normal;color:#000;-webkit-text-stroke:0.1px;">Add Note</div>
<div class="t" style="left:901.4000000000001px;width:600px;text-align:center;top:593.05px;font-size:14px;font-weight:bold;color:#000;">Favorite</div>
<div class="t" style="left:901.4000000000001px;width:600px;text-align:center;top:622.94px;font-size:9.4px;font-weight:normal;color:#000;-webkit-text-stroke:0.1px;">Change To:</div>
<div style="left:1135px;top:633px;width:134px;height:17px;background:#fff;border:1px solid #767676;border-radius:2px;box-sizing:border-box;"></div>
<div class="t" style="left:1139px;top:635.66px;font-size:12px;font-weight:normal;color:#000;-webkit-text-stroke:0.1px;">Favorite</div>
<svg style="position:absolute;left:1256px;top:638.9px" width="9" height="6" viewBox="0 0 9 6"><path d="M1 1 L4.5 4.5 L8 1" fill="none" stroke="#000" stroke-width="1.6"/></svg>
<div class="t" style="left:993px;width:600px;text-align:center;top:615.93px;font-size:11.3px;font-weight:normal;color:#000;-webkit-text-stroke:0.1px;">sal</div>
<div class="t" style="left:1051.3px;width:600px;text-align:center;top:592.88px;font-size:14.2px;font-weight:bold;color:#000;">sal</div>
<div class="t" style="left:1051.3px;width:600px;text-align:center;top:622.94px;font-size:9.4px;font-weight:normal;color:#000;-webkit-text-stroke:0.1px;">Change To:</div>
<div style="left:1317px;top:633px;width:69px;height:17px;background:#fff;border:1px solid #767676;border-radius:2px;box-sizing:border-box;"></div>
<div class="t" style="left:1320.5px;top:635.66px;font-size:12px;font-weight:normal;color:#000;-webkit-text-stroke:0.1px;">sal</div>
<svg style="position:absolute;left:1373px;top:638.9px" width="9" height="6" viewBox="0 0 9 6"><path d="M1 1 L4.5 4.5 L8 1" fill="none" stroke="#000" stroke-width="1.6"/></svg>
<div class="t" style="left:-259px;width:600px;text-align:center;top:757.63px;font-size:12.6px;font-weight:normal;color:#000;-webkit-text-stroke:0.1px;">3</div>
<div class="t" style="left:-259px;width:600px;text-align:center;top:785.10px;font-size:11.7px;font-weight:normal;color:#151515;-webkit-text-stroke:0.1px;">08/08/2012</div>
<div class="t" style="left:-259px;width:600px;text-align:center;top:798.10px;font-size:11.7px;font-weight:normal;color:#151515;-webkit-text-stroke:0.1px;">17:39:12</div>
<div class="t" style="left:77px;top:765.63px;font-size:16.5px;font-weight:bold;color:#000;">08/13/2023</div>
<div class="t" style="left:77.5px;top:785.63px;font-size:16.5px;font-weight:bold;color:#000;">Sunday</div>
<div class="t" style="left:166px;top:706.35px;font-size:14px;font-weight:bold;color:#551A8B;text-decoration:underline;">LL0001056</div>
<div style="left:166px;top:738px;width:90px;height:45px;background:#22D050"></div>
<div style="left:169px;top:749px;width:85px;height:24px;background:#2ECC55;border:1px solid #3D4A52;border-radius:1px;box-sizing:border-box"></div>
<div style="left:171px;top:752px;width:81px;height:18px;background:#3A4150"></div>
<div class="t" style="left:173px;top:752.5px;font-size:19.5px;line-height:17px;color:#22DD50;-webkit-text-stroke:0.75px #22DD50;transform:scaleX(0.8);transform-origin:0 0">L MOVING</div>
<div class="t" style="left:166.4px;top:783.15px;font-size:14px;font-weight:bold;color:#000;">Temp</div>
<div class="t" style="left:166.4px;top:815.15px;font-size:14px;font-weight:bold;color:#000;">ESTIMATE</div>
<div class="t" style="left:273.4px;top:734.60px;font-size:18.9px;font-weight:bold;color:#000;">Nancy Michael</div>
<div class="t" style="left:273.4px;top:754.56px;font-size:15.4px;font-weight:normal;color:#0000EE;-webkit-text-stroke:0.1px;text-decoration:underline;">staff093@umn.edu</div>
<div class="t" style="left:273.6px;top:787.95px;font-size:14px;font-weight:bold;color:#000;">612-715-1053</div>
<div class="t" style="left:273.6px;top:820.15px;font-size:14px;font-weight:bold;color:#000;">M:</div>
<div class="t" style="left:484.6px;top:752.55px;font-size:14px;font-weight:bold;color:#000;">5229 35th Ave</div>
<div class="t" style="left:484.6px;top:768.65px;font-size:14px;font-weight:bold;color:#000;">South.</div>
<div class="t" style="left:484.6px;top:784.75px;font-size:14px;font-weight:bold;color:#000;">MINNEAPOLIS,</div>
<div class="t" style="left:484.6px;top:800.85px;font-size:14px;font-weight:bold;color:#000;">MN </div>
<div class="t" style="left:510.2px;top:800.85px;font-size:14px;font-weight:bold;color:#0000EE;text-decoration:underline;">55417</div>
<div class="t" style="left:613.5px;top:752.55px;font-size:14px;font-weight:bold;color:#000;">TBA</div>
<div class="t" style="left:613.5px;top:768.65px;font-size:14px;font-weight:bold;color:#000;">EAST</div>
<div class="t" style="left:613.5px;top:784.75px;font-size:14px;font-weight:bold;color:#000;">LANSING, MI</div>
<div class="t" style="left:613.5px;top:800.85px;font-size:14px;font-weight:bold;color:#0000EE;text-decoration:underline;">48823</div>
<div class="t" style="left:438px;width:600px;text-align:center;top:750.89px;font-size:23.4px;font-weight:bold;color:#000;transform:scaleY(1.06);transform-origin:50% 85%;">MI</div>
<div class="t" style="left:438px;width:600px;text-align:center;top:804.95px;font-size:14px;font-weight:bold;color:#0000EE;"><span style="text-decoration:underline">Trip</span></div>
<div class="t" style="left:762px;top:744.55px;font-size:14px;font-weight:bold;color:#000;">3200 C.F @ $5</div>
<div class="t" style="left:762px;top:792.65px;font-size:14px;font-weight:bold;color:#000;">Estimate:</div>
<div class="t" style="left:762px;top:808.65px;font-size:14px;font-weight:bold;color:#000;">$25550</div>
<div style="left:872px;top:707px;width:72px;height:19px;background:#EFEFEF;border:1px solid #8A8A8A;border-radius:2px;box-sizing:border-box;"></div>
<div class="t" style="left:608.0px;width:600px;text-align:center;top:710.54px;font-size:12px;font-weight:bold;color:#000;">Send SMS</div>
<svg style="position:absolute;left:872px;top:725.5px" width="58" height="27" viewBox="0 0 58 27"><rect x="30.5" y="0.5" width="25" height="26" rx="3" fill="#fff" stroke="#E3E3E3"/><path d="M6 0 H31 V27 H6 Q4 27 4 25 V15.5 L1 13 L4 10.5 V2 Q4 0 6 0 Z" fill="#FF8A1E"/><circle cx="17" cy="13.3" r="11" fill="#fff" stroke="#1D8BC6" stroke-width="0.8"/><text x="16.6" y="19.6" font-family="Liberation Sans" font-weight="bold" font-style="italic" font-size="17.5" fill="#0B7DC1" stroke="#0B7DC1" stroke-width="0.9" text-anchor="middle">R</text><ellipse cx="43.2" cy="12.1" rx="8.4" ry="6.9" fill="#0B80C4"/><path d="M38.3 16 L36.3 21 L42.5 18.2 Z" fill="#0B80C4"/></svg>
<div style="left:872px;top:752px;width:34px;height:16px;background:#D0D0D0;border:2px solid #111;box-sizing:border-box;"></div>
<div class="t" style="left:589px;width:600px;text-align:center;top:754.91px;font-size:10.5px;font-weight:normal;color:#000;-webkit-text-stroke:0.1px;">Edit</div>
<div style="left:872px;top:784.5px;width:81px;height:19px;background:#EFEFEF;border:1px solid #8A8A8A;border-radius:2px;box-sizing:border-box;"></div>
<div class="t" style="left:612.5px;width:600px;text-align:center;top:788.04px;font-size:12px;font-weight:bold;color:#000;">Send e-mail</div>
<div style="left:992px;top:707px;width:137px;height:15px;background:#2ECC48;border:1px solid #444;box-sizing:border-box"></div>
<div style="left:1085px;top:707px;width:1px;height:15px;background:#444"></div>
<div class="t" style="left:739px;width:600px;text-align:center;top:709.84px;font-size:9.4px;font-weight:bold;color:#000;">Time &amp; User</div>
<div class="t" style="left:1089.7px;top:709.84px;font-size:9.4px;font-weight:bold;color:#000;">Note</div>
<div class="t" style="left:992.9px;top:722.68px;font-size:11.6px;font-weight:normal;color:#0000EE;-webkit-text-stroke:0.1px;text-decoration:underline;">History</div>
<div class="t" style="left:992.7px;top:752.00px;font-size:11.7px;font-weight:bold;color:#000;">Add Note:</div>
<div style="left:993px;top:765.5px;width:113px;height:17px;background:#fff;border:1px solid #767676;border-radius:2px;box-sizing:border-box;"></div>
<div class="t" style="left:997px;top:768.16px;font-size:12px;font-weight:normal;color:#000;-webkit-text-stroke:0.1px;">Quick add Note...</div>
<svg style="position:absolute;left:1093px;top:771.4px" width="9" height="6" viewBox="0 0 9 6"><path d="M1 1 L4.5 4.5 L8 1" fill="none" stroke="#000" stroke-width="1.6"/></svg>
<div style="left:993px;top:783px;width:63px;height:16px;background:#fff;border:1px solid #767676;border-radius:2px;box-sizing:border-box;"></div>
<div class="t" style="left:997.5px;top:785.16px;font-size:12px;font-weight:normal;color:#000;-webkit-text-stroke:0.1px;">1 - Low</div>
<svg style="position:absolute;left:1043px;top:788.4px" width="9" height="6" viewBox="0 0 9 6"><path d="M1 1 L4.5 4.5 L8 1" fill="none" stroke="#000" stroke-width="1.6"/></svg>
<div style="left:993px;top:800.5px;width:101px;height:18px;background:#fff;border:1px solid #767676;border-radius:2px;box-sizing:border-box;"></div>
<div class="t" style="left:996.2px;top:803.66px;font-size:12px;font-weight:normal;color:#000;-webkit-text-stroke:0.1px;">07/08/2023</div>
<svg style="position:absolute;left:1102px;top:802.0px" width="12" height="12" viewBox="0 0 13 13"><rect x="0" y="0" width="13" height="13" rx="2" fill="#0075FF"/><path d="M2.8 6.6 L5.3 9.1 L10.2 3.6" fill="none" stroke="#fff" stroke-width="1.9"/></svg>
<div style="left:993px;top:819.5px;width:54px;height:15px;background:#EFEFEF;border:1px solid #8A8A8A;border-radius:2px;box-sizing:border-box;"></div>
<div class="t" style="left:720.0px;width:600px;text-align:center;top:822.17px;font-size:9.6px;font-weight:normal;color:#000;-webkit-text-stroke:0.1px;">Add Note</div>
<div class="t" style="left:901.4000000000001px;width:600px;text-align:center;top:756.15px;font-size:14px;font-weight:bold;color:#000;">Favorite</div>
<div class="t" style="left:901.4000000000001px;width:600px;text-align:center;top:786.44px;font-size:9.4px;font-weight:normal;color:#000;-webkit-text-stroke:0.1px;">Change To:</div>
<div style="left:1135px;top:796.5px;width:134px;height:17px;background:#fff;border:1px solid #767676;border-radius:2px;box-sizing:border-box;"></div>
<div class="t" style="left:1139px;top:799.16px;font-size:12px;font-weight:normal;color:#000;-webkit-text-stroke:0.1px;">Favorite</div>
<svg style="position:absolute;left:1256px;top:802.4px" width="9" height="6" viewBox="0 0 9 6"><path d="M1 1 L4.5 4.5 L8 1" fill="none" stroke="#000" stroke-width="1.6"/></svg>
<div class="t" style="left:993px;width:600px;text-align:center;top:780.03px;font-size:11.3px;font-weight:normal;color:#000;-webkit-text-stroke:0.1px;">sal</div>
<div class="t" style="left:1051.3px;width:600px;text-align:center;top:755.98px;font-size:14.2px;font-weight:bold;color:#000;">nikki</div>
<div class="t" style="left:1051.3px;width:600px;text-align:center;top:786.44px;font-size:9.4px;font-weight:normal;color:#000;-webkit-text-stroke:0.1px;">Change To:</div>
<div style="left:1317px;top:796.5px;width:69px;height:17px;background:#fff;border:1px solid #767676;border-radius:2px;box-sizing:border-box;"></div>
<div class="t" style="left:1320.5px;top:799.16px;font-size:12px;font-weight:normal;color:#000;-webkit-text-stroke:0.1px;">nikki</div>
<svg style="position:absolute;left:1373px;top:802.4px" width="9" height="6" viewBox="0 0 9 6"><path d="M1 1 L4.5 4.5 L8 1" fill="none" stroke="#000" stroke-width="1.6"/></svg>
<div style="left:1239px;top:783px;width:147px;height:31px;background:#fff;box-shadow:0 1px 4px rgba(0,0,0,0.18);border-radius:2px"></div>
<div class="t" style="left:1276.4px;top:791.5px;font-size:14.6px;line-height:16px;letter-spacing:-0.25px;-webkit-text-stroke:0.35px"><span style="color:#1B87C9;-webkit-text-stroke-color:#1B87C9">Ring</span><span style="color:#F5792A;-webkit-text-stroke-color:#F5792A">Central</span></div>
<svg style="position:absolute;left:1283.5px;top:790px" width="6" height="4" viewBox="0 0 6 4"><path d="M0.8 3 Q3 0.6 5.2 3" fill="none" stroke="#F5792A" stroke-width="1.1"/></svg>
<div style="left:1364px;top:794px;width:11px;height:11px;border:1px solid #777;box-sizing:border-box"></div></body></html>
